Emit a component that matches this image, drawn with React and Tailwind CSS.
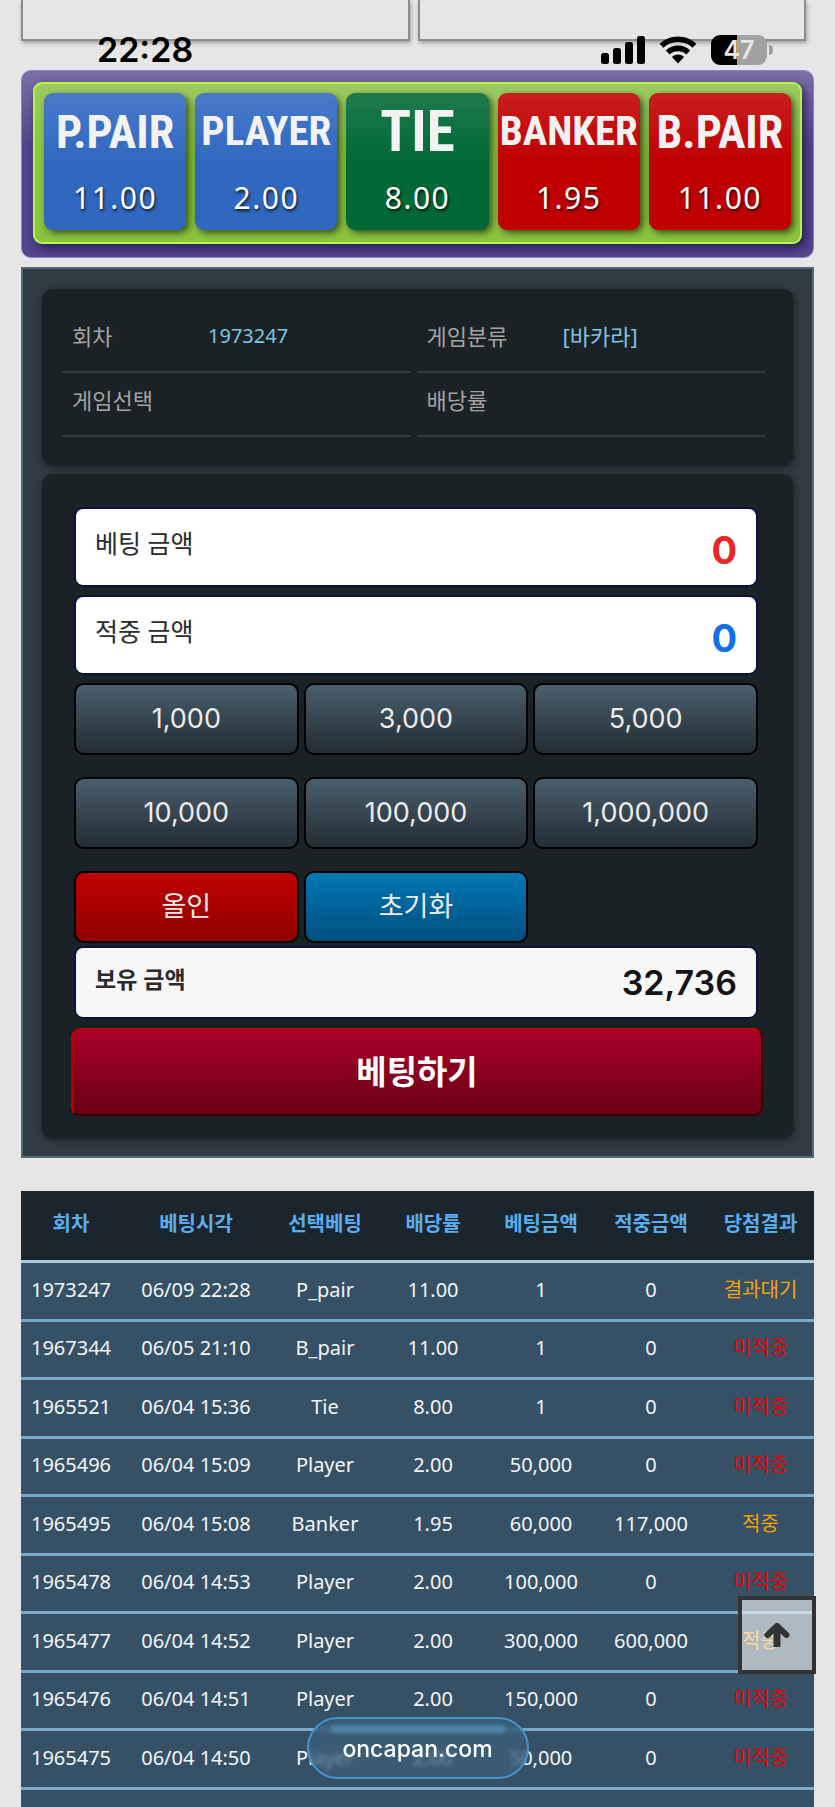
/**
 * Mobile baccarat betting page: odds board, bet slip and bet history.
 * - Picking a tile on the board fills in the slip's game and odds
 * - The chip buttons add to the stake; all-in uses the whole balance
 */

import { useState } from 'react'
import clsx from 'clsx'

const BALANCE = 32736
const ROUND = '1973247'

const OUTCOMES = [
  { id: 'P.PAIR', rate: 11, tile: 'bg-[#3068c0]', title: 'text-[46px]' },
  { id: 'PLAYER', rate: 2, tile: 'bg-[#3068c0]', title: 'text-[41px]' },
  { id: 'TIE', rate: 8, tile: 'bg-[#006835]', title: 'text-[57px]' },
  { id: 'BANKER', rate: 1.95, tile: 'bg-[#c00000]', title: 'text-[41px]' },
  { id: 'B.PAIR', rate: 11, tile: 'bg-[#c00000]', title: 'text-[46px]' },
]

const CHIPS = [1000, 3000, 5000, 10000, 100000, 1000000]

const COLUMNS = [
  { label: '회차', width: 'w-[100px]' },
  { label: '베팅시각', width: 'w-[150px]' },
  { label: '선택베팅', width: 'w-[108px]' },
  { label: '배당률', width: 'w-[108px]' },
  { label: '베팅금액', width: 'w-[108px]' },
  { label: '적중금액', width: 'w-[112px]' },
  { label: '당첨결과', width: 'w-[107px]' },
]

const HISTORY = [
  ['1973247', '06/09 22:28', 'P_pair', '11.00', '1', '0', '결과대기'],
  ['1967344', '06/05 21:10', 'B_pair', '11.00', '1', '0', '미적중'],
  ['1965521', '06/04 15:36', 'Tie', '8.00', '1', '0', '미적중'],
  ['1965496', '06/04 15:09', 'Player', '2.00', '50,000', '0', '미적중'],
  ['1965495', '06/04 15:08', 'Banker', '1.95', '60,000', '117,000', '적중'],
  ['1965478', '06/04 14:53', 'Player', '2.00', '100,000', '0', '미적중'],
  ['1965477', '06/04 14:52', 'Player', '2.00', '300,000', '600,000', '적중'],
  ['1965476', '06/04 14:51', 'Player', '2.00', '150,000', '0', '미적중'],
  ['1965475', '06/04 14:50', 'Player', '2.00', '50,000', '0', '미적중'],
]

function StatusBar() {
  return (
    <div className="pointer-events-none absolute inset-x-0 top-0 z-20 flex items-center justify-between pt-[29px] pr-[62px] pl-[97px] font-['Inter',sans-serif] text-black">
      <span className="text-[34px] leading-[42px] font-semibold">22:28</span>
      <div className="flex items-center gap-[14px]">
        <svg className="h-[28px] w-[44px]" viewBox="0 0 44 28" aria-hidden="true">
          <rect x="0" y="17" width="8" height="11" rx="2.5" />
          <rect x="12" y="12" width="8" height="16" rx="2.5" />
          <rect x="24" y="6" width="8" height="22" rx="2.5" />
          <rect x="36" y="0" width="8" height="28" rx="2.5" />
        </svg>
        <svg className="h-[28px] w-[38px]" viewBox="0 0 38 28" aria-hidden="true">
          <path d="M19 0.5C26.2 0.5 32.6 3.3 37.4 7.8L33.6 11.8C29.8 8.2 24.7 6 19 6S8.2 8.2 4.4 11.8L0.6 7.8C5.4 3.3 11.8 0.5 19 0.5Z" />
          <path d="M19 9.6C23.7 9.6 28 11.4 31.2 14.4L27.3 18.4C25.1 16.4 22.2 15.2 19 15.2S12.9 16.4 10.7 18.4L6.8 14.4C10 11.4 14.3 9.6 19 9.6Z" />
          <path d="M19 18.6C21.3 18.6 23.4 19.5 25 20.9L19 27.4L13 20.9C14.6 19.5 16.7 18.6 19 18.6Z" />
        </svg>
        <div className="flex items-center gap-[2px]">
          <span className="flex h-[30px] w-[56px] items-center justify-center rounded-[9px] bg-linear-to-r from-black from-47% to-[#a1a1a1] to-47% text-[25px] leading-[30px] font-semibold text-[#e6e6e6]">
            47
          </span>
          <span className="h-[10px] w-[4px] rounded-r-full bg-[#a1a1a1]" />
        </div>
      </div>
    </div>
  )
}

function OddsBoard({ selected, onSelect }) {
  return (
    <section
      aria-label="배당"
      className="rounded-[10px] border border-[#8f80cc] bg-linear-to-b from-[#7c6fa6] to-[#54458c] to-40% p-[11px] pb-[13px]"
    >
      <div className="grid grid-cols-5 gap-[9px] rounded-[9px] border-2 border-[#b4f350] bg-linear-to-b from-[#9ccb62] to-[#8bc53f] to-40% px-[9px] pt-[9px] pb-[12px] shadow-[3px_4px_10px_rgba(20,10,60,0.7)]">
        {OUTCOMES.map((outcome) => (
          <button
            key={outcome.id}
            type="button"
            aria-pressed={selected === outcome.id}
            onClick={() => onSelect(outcome.id)}
            className={clsx(
              'flex h-[137px] flex-col items-center rounded-[9px] bg-linear-to-b from-white/12 to-transparent to-50% pt-[9px] text-white shadow-[3px_3px_7px_rgba(0,0,0,0.6)]',
              outcome.tile
            )}
          >
            <span
              className={clsx(
                "flex h-[60px] items-center font-['Roboto_Condensed','Liberation_Sans_Narrow','Roboto',sans-serif] font-bold text-[#f2f2f2]",
                outcome.title
              )}
            >
              {outcome.id}
            </span>
            <span className="mt-[16px] text-[30px] leading-[40px] tracking-wider [text-shadow:1px_2px_3px_rgba(0,0,0,0.8)]">
              {outcome.rate.toFixed(2)}
            </span>
          </button>
        ))}
      </div>
    </section>
  )
}

function InfoItem({ label, value, valueClass }) {
  return (
    <div className="flex h-[64px] items-center border-b-2 border-[#2e3a41] pb-[8px] pl-[10px] text-[22px] text-[#a3a3a3]">
      <dt className="w-[136px]">{label}</dt>
      <dd className={clsx('text-[#7fc4e3]', valueClass)}>{value}</dd>
    </div>
  )
}

function AmountField({ id, label, value, className, labelClass, valueClass }) {
  return (
    <div
      className={clsx(
        'flex items-center justify-between rounded-[9px] border-2 border-[#08133f] px-[19px]',
        className
      )}
    >
      <label htmlFor={id} className={clsx('shrink-0 pb-[6px] text-[#2b2b2b]', labelClass)}>
        {label}
      </label>
      <input
        id={id}
        readOnly
        value={value}
        className={clsx("w-1/2 text-right font-['Inter',sans-serif] outline-none", valueClass)}
      />
    </div>
  )
}

function SlipButton({ className, onClick, children }) {
  return (
    <button
      type="button"
      onClick={onClick}
      className={clsx(
        "h-[72px] rounded-[10px] border-2 border-black bg-linear-to-b font-['Inter','Noto_Sans_CJK_KR',sans-serif] text-[27px] text-[#ececec]",
        className
      )}
    >
      {children}
    </button>
  )
}

function HistoryTable() {
  return (
    <table className="w-full table-fixed border-separate border-spacing-0 bg-[#365166] text-center text-[20px] leading-[28px] text-[#f2f6f8]">
      <thead>
        <tr className="h-[72px] bg-[#1a252e] text-[#5aaeee]">
          {COLUMNS.map((column) => (
            <th
              key={column.label}
              scope="col"
              className={clsx('border-b-3 border-[#a9cbe0] pb-[4px] font-bold', column.width)}
            >
              {column.label}
            </th>
          ))}
        </tr>
      </thead>
      <tbody>
        {HISTORY.map((row) => (
          <tr key={row[0]} className="h-[59px] even:h-[58px]">
            {row.map((cell, i) => (
              <td
                key={COLUMNS[i].label}
                className={clsx(
                  'border-b-3 border-[#79aac8] pb-[3px] whitespace-nowrap',
                  i === 6 && (cell === '미적중' ? 'text-[#e60000]' : 'text-[#f5a300]')
                )}
              >
                {cell}
              </td>
            ))}
          </tr>
        ))}
        <tr className="h-[59px]">
          <td colSpan={7} />
        </tr>
      </tbody>
    </table>
  )
}

export default function App() {
  const [selected, setSelected] = useState(null)
  const [stake, setStake] = useState(0)

  const outcome = OUTCOMES.find((o) => o.id === selected)
  const payout = outcome ? Math.floor(stake * outcome.rate) : 0

  return (
    <div className="relative h-screen overflow-hidden bg-[#e6e6e6] font-['Noto_Sans','Noto_Sans_CJK_KR',sans-serif]">
      <StatusBar />

      <main className="px-[21px]">
        {/* Result road panels, scrolled almost out of view */}
        <div className="grid grid-cols-2 gap-[8px] pr-[8px]">
          <div className="h-[41px] border-2 border-t-0 border-[#8c8c8c] shadow-[1px_2px_4px_rgba(0,0,0,0.3)]" />
          <div className="h-[41px] border-2 border-t-0 border-[#8c8c8c] shadow-[1px_2px_4px_rgba(0,0,0,0.3)]" />
        </div>

        <div className="mt-[29px]">
          <OddsBoard selected={selected} onSelect={setSelected} />
        </div>

        {/* Bet slip */}
        <section className="mt-[9px] border-2 border-[#536a76] bg-[#303b43] px-[19px] pt-[20px] pb-[18px]">
          <dl className="grid grid-cols-2 gap-x-[6px] rounded-[10px] bg-[#1b2225] pt-[20px] pr-[28px] pb-[28px] pl-[20px] shadow-[1px_2px_6px_rgba(0,0,0,0.5)]">
            <InfoItem label="회차" value={ROUND} valueClass="text-[20px]" />
            <InfoItem label="게임분류" value="[바카라]" valueClass="text-[22px]" />
            <InfoItem label="게임선택" value={selected} valueClass="text-[20px]" />
            <InfoItem label="배당률" value={outcome?.rate.toFixed(2)} valueClass="text-[20px]" />
          </dl>

          <form
            onSubmit={(e) => e.preventDefault()}
            className="mt-[9px] rounded-[10px] bg-[#1b2225] pt-[33px] pr-[30px] pb-[22px] pl-[29px] shadow-[1px_2px_6px_rgba(0,0,0,0.5)]"
          >
            <div className="mr-[5px] ml-[3px]">
              <div className="flex flex-col gap-[8px]">
                <AmountField
                  id="stake"
                  label="베팅 금액"
                  value={stake.toLocaleString('en-US')}
                  className="h-[80px] bg-white"
                  labelClass="text-[25px]"
                  valueClass="pt-[6px] text-[38px] font-bold text-[#e62828]"
                />
                <AmountField
                  id="payout"
                  label="적중 금액"
                  value={payout.toLocaleString('en-US')}
                  className="h-[80px] bg-white"
                  labelClass="text-[25px]"
                  valueClass="pt-[6px] text-[38px] font-bold text-[#116fe8]"
                />
              </div>

              <div className="mt-[8px] grid grid-cols-3 gap-x-[5px] gap-y-[22px]">
                {CHIPS.map((chip) => (
                  <SlipButton
                    key={chip}
                    className="from-[#4a5f6d] to-[#232d34]"
                    onClick={() => setStake(stake + chip)}
                  >
                    {chip.toLocaleString('en-US')}
                  </SlipButton>
                ))}
                <SlipButton className="from-[#c00000] to-[#8f0000]" onClick={() => setStake(BALANCE)}>
                  올인
                </SlipButton>
                <SlipButton className="from-[#0078b4] to-[#004f80]" onClick={() => setStake(0)}>
                  초기화
                </SlipButton>
              </div>

              <div className="mt-[3px]">
                <AmountField
                  id="balance"
                  label="보유 금액"
                  value={BALANCE.toLocaleString('en-US')}
                  className="h-[73px] bg-[#f7f7f7]"
                  labelClass="text-[23px] font-bold"
                  valueClass="text-[34px] font-semibold text-[#141414]"
                />
              </div>
            </div>

            <button
              type="submit"
              className="mt-[9px] h-[88px] w-full rounded-[9px] border-2 border-t-[#b80000] border-r-[#3a0008] border-b-[#3a0008] border-l-[#b80000] bg-linear-to-b from-[#ab0028] to-[#690015] text-[33px] font-bold text-white"
            >
              베팅하기
            </button>
          </form>
        </section>

        <div className="mt-[33px]">
          <HistoryTable />
        </div>
      </main>

      <button
        type="button"
        aria-label="맨 위로"
        onClick={() => window.scrollTo({ top: 0, behavior: 'smooth' })}
        className="absolute right-[19px] bottom-[133px] z-10 flex h-[78px] w-[78px] items-center justify-center border-4 border-[#333] bg-white/60"
      >
        <svg className="h-[26px] w-[26px]" viewBox="0 0 26 26" fill="none" stroke="#333" aria-hidden="true">
          <path strokeLinejoin="round" strokeWidth="7" d="M13 25V5" />
          <path strokeLinecap="round" strokeLinejoin="round" strokeWidth="6" d="M3.5 13L13 4L22.5 13" />
        </svg>
      </button>

      {/* Browser address pill */}
      <div className="absolute bottom-[28px] left-1/2 z-20 flex h-[62px] w-[222px] -translate-x-1/2 items-center justify-center rounded-full border-2 border-[#4592cc] bg-[#3b5f7b]/70 pt-[2px] font-['Inter',sans-serif] text-[23px] font-medium text-white backdrop-blur-[2px]">
        <span className="absolute inset-x-[22px] top-[6px] h-[8px] rounded-full bg-[#4f86a8] blur-[2px]" />
        <span className="relative">oncapan.com</span>
      </div>
    </div>
  )
}
